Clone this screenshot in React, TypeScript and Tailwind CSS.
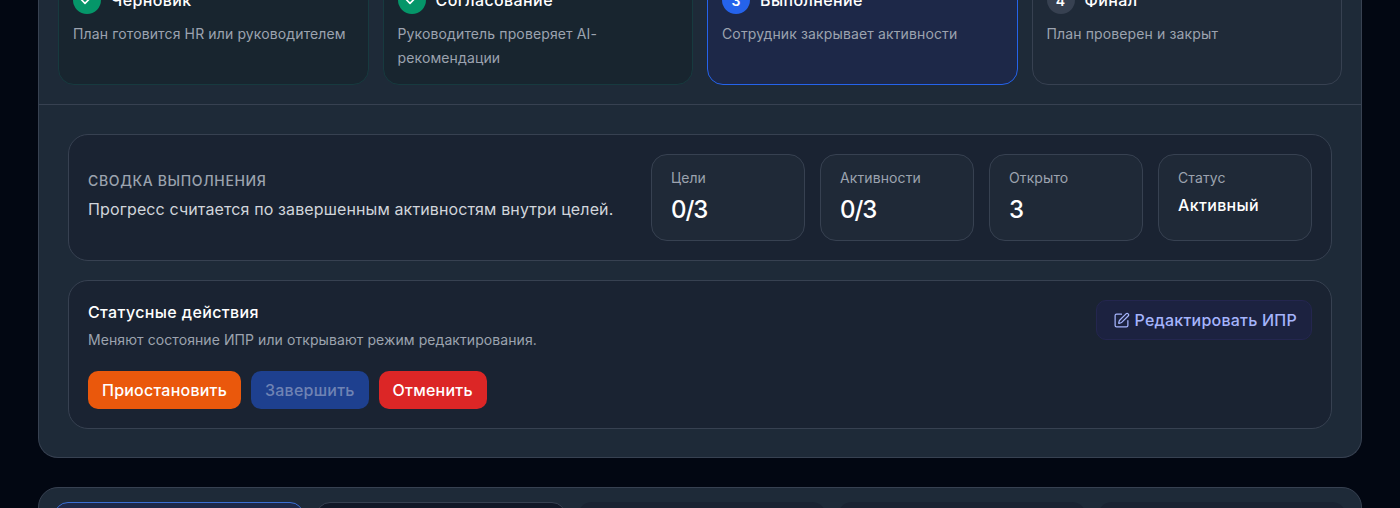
import { Check, SquarePen } from 'lucide-react';

const font = { fontFamily: 'Inter, "Noto Sans", sans-serif' };

const steps = [
    { n: 'done', title: 'Черновик', text: 'План готовится HR или руководителем', card: 'border-[#173a3f] bg-[#18252f]', dot: 'bg-[#059669]' },
    { n: 'done', title: 'Согласование', text: 'Руководитель проверяет AI-рекомендации', card: 'border-[#173a3f] bg-[#18252f]', dot: 'bg-[#059669]' },
    { n: '3', title: 'Выполнение', text: 'Сотрудник закрывает активности', card: 'border-[#2563eb] bg-[#1d2848]', dot: 'bg-[#2563eb]' },
    { n: '4', title: 'Финал', text: 'План проверен и закрыт', card: 'border-[#374151] bg-[#1f2a38]', dot: 'bg-[#374151]' },
];

const stats = [
    { label: 'Цели', value: '0/3' },
    { label: 'Активности', value: '0/3' },
    { label: 'Открыто', value: '3' },
];

export default function App() {
    return (
        <div className="h-[508px] overflow-hidden bg-[#020712] px-[38px]" style={font}>
            <div className="-mt-[17px] rounded-b-[20px] border border-t-0 border-[#374151] bg-[#1e2a38]">
                {/* Stepper */}
                <div className="grid grid-cols-4 gap-[14px] border-b border-[#374151] px-[19px] pb-[19px]">
                    {steps.map(step => (
                        <div key={step.title} className={`h-[102px] rounded-[16px] border px-[14px] py-[2px] ${step.card}`}>
                            <div className="flex items-center gap-[10px]">
                                <div className={`flex h-[28px] w-[28px] shrink-0 items-center justify-center rounded-full text-[14px] font-semibold text-white ${step.dot}`}>
                                    {step.n === 'done' ? <Check className="h-4 w-4" strokeWidth={2.5} /> : step.n}
                                </div>
                                <span className="text-[16px] font-medium tracking-[0.4px] text-white">{step.title}</span>
                            </div>
                            <p className="mt-[8px] text-[14px] leading-[24px] tracking-[0.13px] text-[#9ca3af]">{step.text}</p>
                        </div>
                    ))}
                </div>

                <div className="flex flex-col gap-[19px] px-[29px] pt-[29px] pb-[28px]">
                    {/* Summary */}
                    <div className="flex items-center justify-between rounded-[20px] border border-[#374151] bg-[#1a2332] p-[19px]">
                        <div className="pb-[4px]">
                            <div className="text-[14px] font-medium uppercase tracking-[0.65px] text-[#9ca3af]">Сводка выполнения</div>
                            <div className="mt-[6px] text-[16px] tracking-[0.12px] text-[#d1d5db]">Прогресс считается по завершенным активностям внутри целей.</div>
                        </div>
                        <div className="flex gap-[15px]">
                            {stats.map(stat => (
                                <div key={stat.label} className="h-[87px] w-[154px] rounded-[16px] border border-[#374151] bg-[#1f2937] px-[19px] py-[12px]">
                                    <div className="text-[14px] tracking-[0.1px] text-[#9ca3af]">{stat.label}</div>
                                    <div className="mt-[6px] text-[24px] leading-[32px] font-medium tracking-[-1px] text-white">{stat.value}</div>
                                </div>
                            ))}
                            <div className="h-[87px] w-[154px] rounded-[16px] border border-[#374151] bg-[#1f2937] px-[19px] py-[12px]">
                                <div className="text-[14px] tracking-[0.1px] text-[#9ca3af]">Статус</div>
                                <div className="mt-[5px] text-[16px] font-medium tracking-[0.35px] text-white">Активный</div>
                            </div>
                        </div>
                    </div>

                    {/* Actions */}
                    <div className="flex items-start justify-between rounded-[20px] border border-[#374151] bg-[#1a2332] p-[19px]">
                        <div>
                            <div className="text-[16px] leading-[24px] font-medium tracking-[0.38px] text-white">Статусные действия</div>
                            <div className="mt-[6px] text-[14px] leading-[20px] tracking-[0.08px] text-[#9ca3af]">Меняют состояние ИПР или открывают режим редактирования.</div>
                            <div className="mt-[21px] flex gap-[10px]">
                                <button className="h-[38px] rounded-[10px] bg-[#ea580c] px-[14px] text-[16px] font-medium tracking-[0.23px] text-white">Приостановить</button>
                                <button className="h-[38px] rounded-[10px] bg-[#1e408f] px-[14px] text-[16px] font-medium tracking-[0.23px] text-[#6f83b4]">Завершить</button>
                                <button className="h-[38px] rounded-[10px] bg-[#dc2626] px-[14px] text-[16px] font-medium tracking-[0.23px] text-white">Отменить</button>
                            </div>
                        </div>
                        <button className="flex h-[40px] items-center gap-[4px] rounded-[10px] border border-[#24264f] bg-[#1c2240] pr-[14px] pl-[16px] text-[16px] font-medium tracking-[0.23px] text-[#a5b4fc]">
                            <SquarePen className="h-[17px] w-[17px]" strokeWidth={1.75} />
                            Редактировать ИПР
                        </button>
                    </div>
                </div>
            </div>

            {/* Tabs panel, cut off by the window */}
            <div className="mt-[29px] h-[60px] rounded-t-[20px] border border-[#374151] bg-[#1e2a38] px-[15px] pt-[14px]">
                <div className="flex gap-[12px]">
                    <div className="h-[40px] flex-1 rounded-t-[14px] border border-[#3b6fd4] bg-[#1d2848]" />
                    <div className="h-[40px] flex-1 rounded-t-[14px] border border-[#374151] bg-[#111827]" />
                    <div className="h-[40px] flex-1 rounded-t-[14px] bg-[#1a2332]" />
                    <div className="h-[40px] flex-1 rounded-t-[14px] bg-[#1a2332]" />
                    <div className="h-[40px] flex-1 rounded-t-[14px] bg-[#1a2332]" />
                </div>
            </div>
        </div>
    );
}
